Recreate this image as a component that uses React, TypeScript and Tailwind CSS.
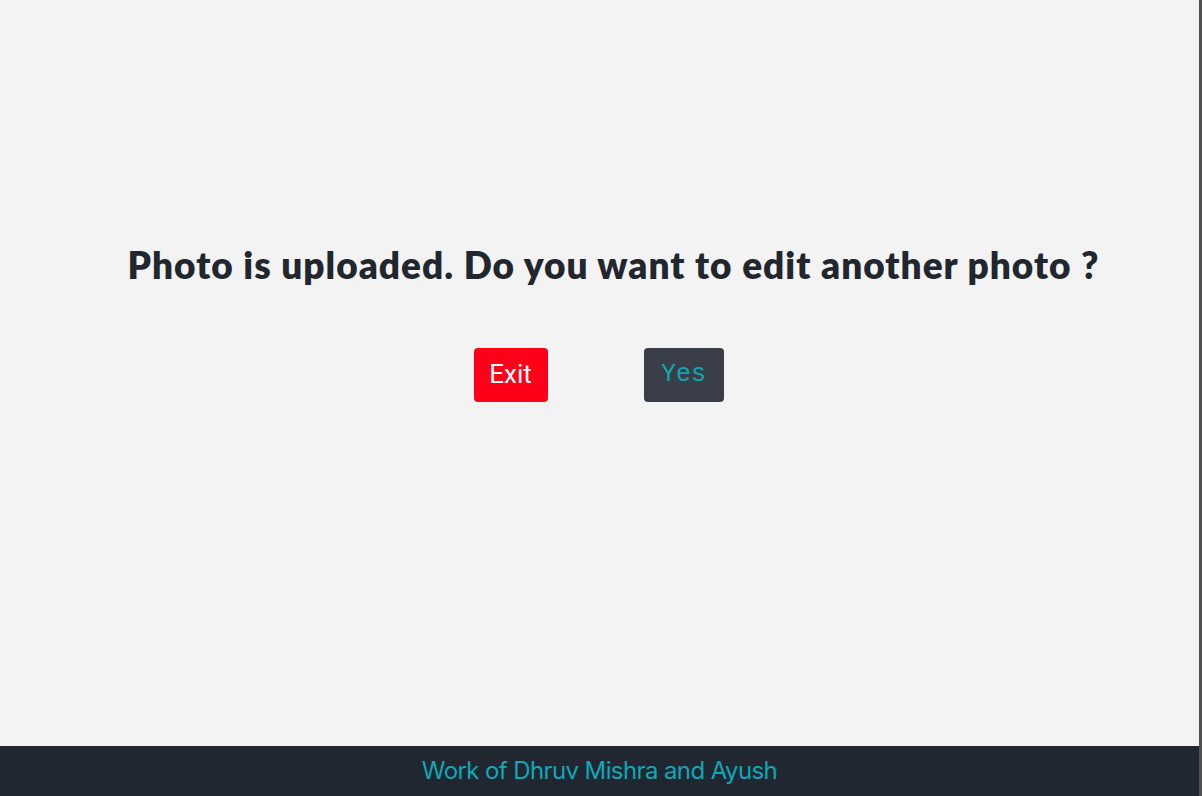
export default function App() {
  return (
    <div className="h-[796px] w-[1202px] flex flex-col bg-[#f3f3f3] border-r-[3px] border-[#505050]">
      {/* Main */}
      <div className="flex-1 flex flex-col items-center pt-[237px]">
        <h1
          className="pl-[28px] text-[37px] font-extrabold text-[#21262f] tracking-[1px]"
          style={{ fontFamily: 'Lato, sans-serif' }}
        >
          Photo is uploaded. Do you want to edit another photo ?
        </h1>
        <div className="mt-[55px] pr-[2px] flex gap-[96px]">
          <button
            className="h-[54px] w-[74px] rounded-[4px] bg-[#ff0019] text-white text-[26px]"
            style={{ fontFamily: 'Roboto, sans-serif' }}
          >
            Exit
          </button>
          <button
            className="h-[54px] w-[80px] rounded-[4px] bg-[#393e48] text-[#12a6ae] text-[25px]"
            style={{ fontFamily: '"Liberation Mono", monospace' }}
          >
            Yes
          </button>
        </div>
      </div>

      {/* Footer */}
      <footer className="h-[50px] bg-[#202731] flex items-center justify-center">
        <span
          className="text-[24px] text-[#0ea8b8] tracking-[-0.6px]"
          style={{ fontFamily: 'Inter, sans-serif' }}
        >
          Work of Dhruv Mishra and Ayush
        </span>
      </footer>
    </div>
  );
}
